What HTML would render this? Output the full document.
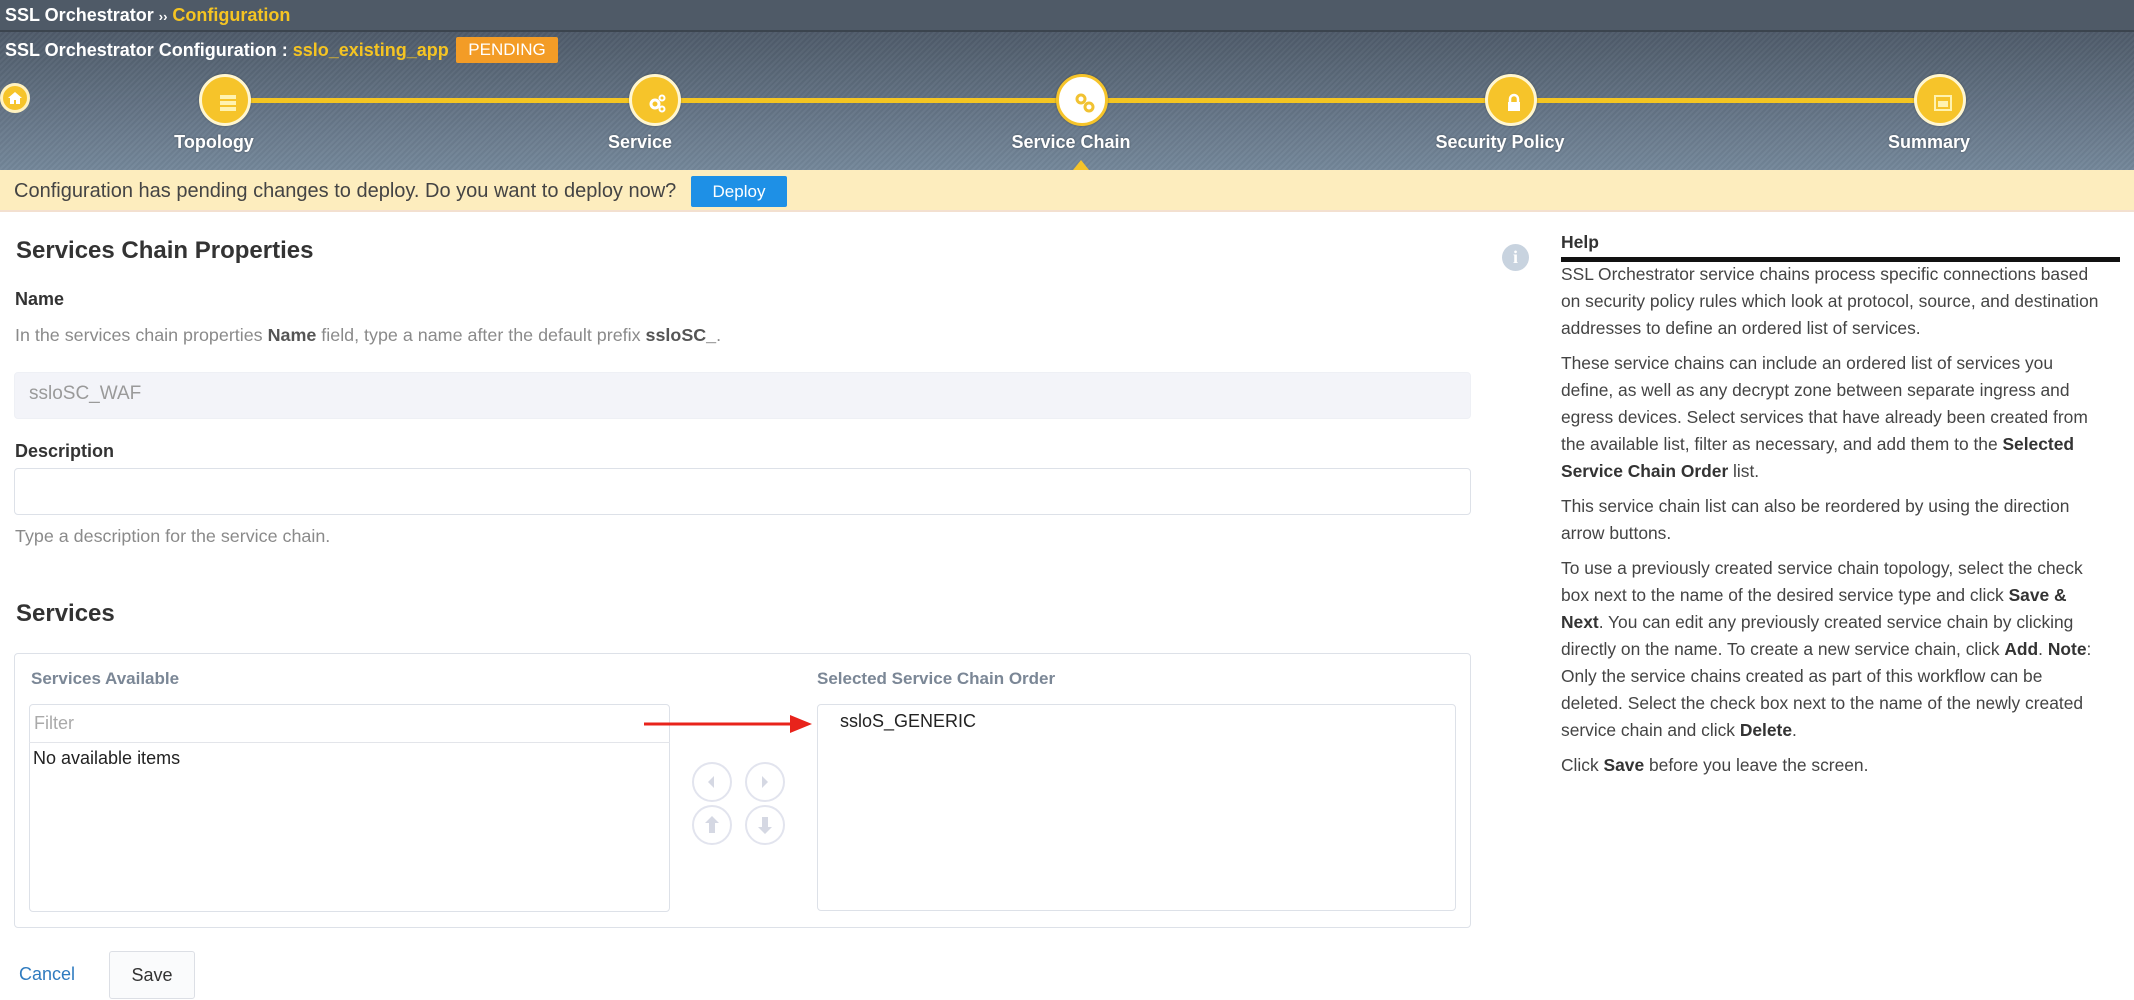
<!DOCTYPE html>
<html><head><meta charset="utf-8"><style>
*{box-sizing:border-box;margin:0;padding:0}
body{width:2134px;height:1000px;overflow:hidden;background:#fff;font-family:"Liberation Sans",Arial,sans-serif;position:relative;color:#333}
.a{position:absolute;white-space:nowrap}
#top{position:absolute;left:0;top:0;width:2134px;height:32px;background:#4f5a67;border-bottom:2px solid #3b444e}
#steps{position:absolute;left:0;top:32px;width:2134px;height:138px;background:repeating-linear-gradient(135deg,rgba(255,255,255,0.03) 0 2px,rgba(0,0,0,0.03) 2px 4px),linear-gradient(#4f5b6a,#74879a)}
.line{position:absolute;left:225px;top:98px;width:1715px;height:5px;background:#f4c521}
.c{position:absolute;width:52px;height:52px;border-radius:50%;background:#f6c42a;border:3px solid #fff6d0;top:74px;box-shadow:0 0 2px rgba(0,0,0,.3)}
.c svg{position:absolute;left:13px;top:13px}
.lbl{position:absolute;top:132px;color:#fff;font-weight:bold;font-size:18px;width:300px;text-align:center;text-shadow:0 0 2px rgba(0,0,0,.4)}
#banner{position:absolute;left:0;top:170px;width:2134px;height:42px;background:#fdedbe;border-bottom:2px solid #f3e0d0}
.h{font-weight:bold;color:#333}
.muted{color:#8a8a8a;font-size:17.9px}
.box{position:absolute;border:1px solid #dde1e8;border-radius:4px;background:#fff}
.rb{position:absolute;width:40px;height:40px;border-radius:50%;border:2px solid #e2e4ee}
.help{position:absolute;left:1561px;top:261px;width:560px;font-size:17.4px;line-height:27px;color:#444}
.help p{margin-bottom:8px;white-space:nowrap}
.help b{color:#333}
</style></head><body>
<div id="top"></div>
<div class="a" style="left:5px;top:5px;font-size:18px;font-weight:bold;color:#fff">SSL Orchestrator <span style="font-size:13px">&rsaquo;&rsaquo;</span> <span style="color:#f5c422">Configuration</span></div>
<div id="steps"></div>
<div class="a" style="left:5px;top:40px;font-size:18px;font-weight:bold;color:#fff">SSL Orchestrator Configuration : <span style="color:#f5c422">sslo_existing_app</span></div>
<div class="a" style="left:456px;top:37px;width:102px;height:26px;background:#f39c26;color:#fff;font-size:17px;text-align:center;line-height:26px;border-radius:2px">PENDING</div>
<div class="a" style="left:0;top:83px;width:30px;height:30px;border-radius:50%;background:#f6c42a;border:3px solid #fff2c0"><svg width="16" height="14" viewBox="0 0 16 14" style="position:absolute;left:4px;top:5px"><path d="M8 1L1 7h2v6h4V9h2v4h4V7h2z" fill="#fff"/></svg></div>
<div class="line"></div>
<div class="c" style="left:199px"><svg width="26" height="26" viewBox="0 0 26 26"><rect x="5" y="5" width="16" height="4" fill="#fff3b0"/><rect x="5" y="11" width="16" height="4" fill="#fff3b0"/><rect x="5" y="17" width="16" height="4" fill="#fff3b0"/></svg></div>
<div class="c" style="left:629px"><svg width="26" height="26" viewBox="0 0 26 26"><circle cx="10" cy="14" r="4" fill="none" stroke="#fff" stroke-width="3"/><circle cx="17" cy="8" r="2.5" fill="none" stroke="#fff" stroke-width="2"/><circle cx="17" cy="19" r="2.5" fill="none" stroke="#fff" stroke-width="2"/></svg></div>
<div class="c" style="left:1056px;background:#fff;border-color:#f6c42a"><svg width="26" height="26" viewBox="0 0 26 26"><circle cx="9" cy="9" r="4" fill="none" stroke="#f1c232" stroke-width="3"/><circle cx="17" cy="17" r="4" fill="none" stroke="#f1c232" stroke-width="3"/></svg></div>
<div class="c" style="left:1485px"><svg width="26" height="26" viewBox="0 0 26 26"><path d="M9 12V9a4 4 0 0 1 8 0v3" fill="none" stroke="#fff" stroke-width="2.5"/><rect x="7" y="12" width="12" height="9" fill="#fff"/></svg></div>
<div class="c" style="left:1914px"><svg width="26" height="26" viewBox="0 0 26 26"><rect x="5" y="6" width="16" height="14" fill="none" stroke="#fff3b0" stroke-width="2"/><rect x="8" y="11" width="10" height="6" fill="#fff3b0"/></svg></div>
<div class="lbl" style="left:64px">Topology</div>
<div class="lbl" style="left:490px">Service</div>
<div class="lbl" style="left:921px">Service Chain</div>
<div class="lbl" style="left:1350px">Security Policy</div>
<div class="lbl" style="left:1779px">Summary</div>
<div class="a" style="left:1073px;top:160px;width:0;height:0;border-left:8px solid transparent;border-right:8px solid transparent;border-bottom:10px solid #f6c42a"></div>
<div id="banner"></div>
<div class="a" style="left:14px;top:180px;font-size:20px;color:#444">Configuration has pending changes to deploy. Do you want to deploy now?</div>
<div class="a" style="left:691px;top:176px;width:96px;height:31px;background:#1e90e6;color:#fff;font-size:17px;text-align:center;line-height:31px;border-radius:2px">Deploy</div>

<div class="a h" style="left:16px;top:237px;font-size:24px">Services Chain Properties</div>
<div class="a h" style="left:15px;top:289px;font-size:18px">Name</div>
<div class="a muted" style="left:15px;top:325px">In the services chain properties <b style="color:#555">Name</b> field, type a name after the default prefix <b style="color:#555">ssloSC_</b>.</div>
<div class="box" style="left:14px;top:372px;width:1457px;height:47px;background:#f3f4f9;border-color:#eef0f5"></div>
<div class="a" style="left:29px;top:383px;font-size:19px;color:#9a9a9a">ssloSC_WAF</div>
<div class="a h" style="left:15px;top:441px;font-size:18px">Description</div>
<div class="box" style="left:14px;top:468px;width:1457px;height:47px"></div>
<div class="a muted" style="left:15px;top:526px">Type a description for the service chain.</div>
<div class="a h" style="left:16px;top:600px;font-size:24px">Services</div>

<div class="box" style="left:14px;top:653px;width:1457px;height:275px"></div>
<div class="a" style="left:31px;top:669px;font-size:17px;font-weight:bold;color:#7b8796">Services Available</div>
<div class="a" style="left:817px;top:669px;font-size:17px;font-weight:bold;color:#7b8796">Selected Service Chain Order</div>
<div class="box" style="left:29px;top:704px;width:641px;height:208px"></div>
<div class="a" style="left:29px;top:742px;width:641px;height:1px;background:#e3e5ea"></div>
<div class="a" style="left:34px;top:713px;font-size:18px;color:#aaa">Filter</div>
<div class="a" style="left:33px;top:748px;font-size:18px;color:#222">No available items</div>
<div class="box" style="left:817px;top:704px;width:639px;height:207px"></div>
<div class="a" style="left:840px;top:711px;font-size:18px;color:#222">ssloS_GENERIC</div>
<svg class="a" style="left:640px;top:712px" width="175" height="24" viewBox="0 0 175 24"><line x1="4" y1="12" x2="152" y2="12" stroke="#e8231b" stroke-width="3"/><path d="M150 3L172 12L150 21z" fill="#e8231b"/></svg>
<div class="rb" style="left:692px;top:762px"><svg width="36" height="36" viewBox="0 0 36 36"><path d="M20 12l-6 6 6 6z" fill="#d5d8e3"/></svg></div>
<div class="rb" style="left:745px;top:762px"><svg width="36" height="36" viewBox="0 0 36 36"><path d="M15 12l6 6-6 6z" fill="#d5d8e3"/></svg></div>
<div class="rb" style="left:692px;top:805px"><svg width="36" height="36" viewBox="0 0 36 36"><path d="M18 9l-7 7h4v10h6V16h4z" fill="#d5d8e3"/></svg></div>
<div class="rb" style="left:745px;top:805px"><svg width="36" height="36" viewBox="0 0 36 36"><path d="M18 27l-7-7h4V10h6v10h4z" fill="#d5d8e3"/></svg></div>

<div class="a" style="left:19px;top:964px;font-size:18px;color:#2f7bbf">Cancel</div>
<div class="a" style="left:109px;top:951px;width:86px;height:48px;border:1px solid #dcdfe5;border-radius:3px;background:#fafbfc;font-size:18px;text-align:center;line-height:46px;color:#333">Save</div>

<div class="a" style="left:1502px;top:244px;width:27px;height:27px;border-radius:50%;background:#c8d3df;color:#fff;font-weight:bold;font-size:18px;text-align:center;line-height:27px;font-family:'Liberation Serif',serif">i</div>
<div class="a" style="left:1561px;top:232px;font-size:17.5px;font-weight:bold;color:#333">Help</div>
<div class="a" style="left:1561px;top:257px;width:559px;height:5px;background:#111"></div>
<div class="help">
<p>SSL Orchestrator service chains process specific connections based<br>on security policy rules which look at protocol, source, and destination<br>addresses to define an ordered list of services.</p>
<p>These service chains can include an ordered list of services you<br>define, as well as any decrypt zone between separate ingress and<br>egress devices. Select services that have already been created from<br>the available list, filter as necessary, and add them to the <b>Selected</b><br><b>Service Chain Order</b> list.</p>
<p>This service chain list can also be reordered by using the direction<br>arrow buttons.</p>
<p>To use a previously created service chain topology, select the check<br>box next to the name of the desired service type and click <b>Save &amp;</b><br><b>Next</b>. You can edit any previously created service chain by clicking<br>directly on the name. To create a new service chain, click <b>Add</b>. <b>Note</b>:<br>Only the service chains created as part of this workflow can be<br>deleted. Select the check box next to the name of the newly created<br>service chain and click <b>Delete</b>.</p>
<p>Click <b>Save</b> before you leave the screen.</p>
</div>
</body></html>
